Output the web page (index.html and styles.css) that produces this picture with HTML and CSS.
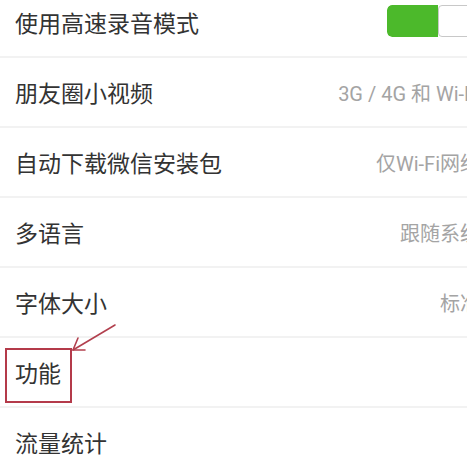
FILE: index.html
```html
<!DOCTYPE html>
<html lang="zh-CN">
<head>
<meta charset="utf-8">
<title>设置</title>
<link rel="stylesheet" href="styles.css">
</head>
<body>
<div class="page">
  <div class="list">
    <div class="row">
      <span class="label">使用高速录音模式</span>
      <span class="toggle"><span class="toggle-on"></span><span class="toggle-knob"></span></span>
    </div>
    <div class="row">
      <span class="label">朋友圈小视频</span>
      <span class="value">3G / 4G 和 Wi-Fi</span>
    </div>
    <div class="row">
      <span class="label">自动下载微信安装包</span>
      <span class="value">仅Wi-Fi网络</span>
    </div>
    <div class="row">
      <span class="label">多语言</span>
      <span class="value">跟随系统</span>
    </div>
    <div class="row">
      <span class="label">字体大小</span>
      <span class="value">标准</span>
    </div>
    <div class="row">
      <span class="label">功能</span>
    </div>
    <div class="row">
      <span class="label">流量统计</span>
    </div>
  </div>
  <div class="highlight-box"></div>
  <svg class="arrow" width="60" height="40" viewBox="0 0 60 40">
    <path d="M55 5 L13 30" stroke="#b2404e" stroke-width="1.6" fill="none" stroke-linecap="round"/>
    <path d="M18 18 L13 30 L25 30" stroke="#b2404e" stroke-width="1.6" fill="none" stroke-linecap="round" stroke-linejoin="round"/>
  </svg>
</div>
</body>
</html>
```

FILE: styles.css
```css
html, body {
  margin: 0;
  padding: 0;
  background: #ffffff;
  overflow: hidden;
}

.page {
  position: relative;
  width: 467px;
  height: 464px;
  overflow: hidden;
  font-family: Roboto, "Noto Sans CJK SC", sans-serif;
}

.list {
  width: 495px;
  margin-top: -12px;
}

.row {
  display: flex;
  align-items: center;
  justify-content: space-between;
  height: 68px;
  padding: 0 15px;
  border-bottom: 2px solid #f2f2f2;
}

.label {
  font-size: 23px;
  color: #333333;
  white-space: nowrap;
}

.value {
  font-size: 20px;
  color: #a4a4a4;
  white-space: nowrap;
}

.toggle {
  display: flex;
  width: 93px;
  height: 32px;
  margin-top: -2px;
  border-radius: 5px;
  overflow: hidden;
  box-sizing: border-box;
}

.toggle-on {
  width: 51px;
  background: #4cb92b;
  border-radius: 5px 0 0 5px;
}

.toggle-knob {
  flex: 1;
  background: #ffffff;
  border: 1px solid #c8c8c8;
  border-radius: 4px;
}

.highlight-box {
  position: absolute;
  left: 5px;
  top: 348px;
  width: 63px;
  height: 51px;
  border: 2px solid #b43a4a;
}

.arrow {
  position: absolute;
  left: 60px;
  top: 320px;
}
```
